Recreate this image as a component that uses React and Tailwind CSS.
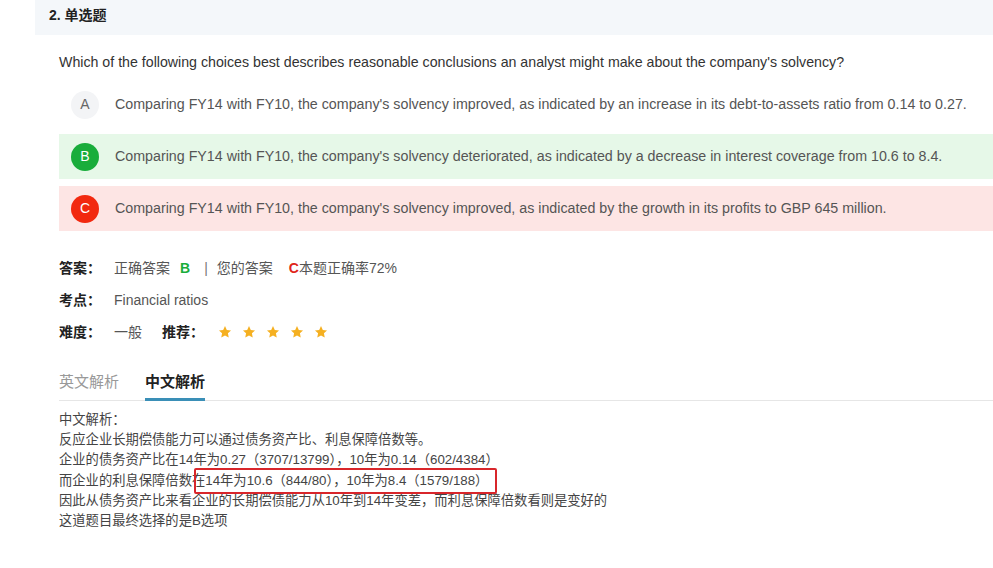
import React from 'react';

const options = [
  {
    key: 'A',
    text: "Comparing FY14 with FY10, the company's solvency improved, as indicated by an increase in its debt-to-assets ratio from 0.14 to 0.27.",
    row: 'bg-white',
    dot: 'bg-[#f3f4f6] text-[#666]',
  },
  {
    key: 'B',
    text: "Comparing FY14 with FY10, the company's solvency deteriorated, as indicated by a decrease in interest coverage from 10.6 to 8.4.",
    row: 'bg-[#e6f8e8]',
    dot: 'bg-[#19ad3b] text-white',
  },
  {
    key: 'C',
    text: "Comparing FY14 with FY10, the company's solvency improved, as indicated by the growth in its profits to GBP 645 million.",
    row: 'bg-[#fde5e4]',
    dot: 'bg-[#f2290f] text-white',
  },
];

function Star() {
  return (
    <svg width="14" height="14" viewBox="0 0 24 24" className="shrink-0">
      <path
        d="M12 1.8l3.1 6.6 7.2.9-5.3 5 1.4 7.1L12 17.9l-6.4 3.5 1.4-7.1-5.3-5 7.2-.9z"
        fill="#f5b021"
      />
    </svg>
  );
}

export default function App() {
  return (
    <div
      className="w-[993px] h-[568px] bg-white overflow-hidden text-[#333]"
      style={{ fontFamily: '"Liberation Sans", "Noto Sans CJK SC", sans-serif' }}
    >
      {/* header */}
      <div className="ml-[35px] h-[35px] bg-[#f4f7fa] pl-[14px] pb-[5px] flex items-center text-[14px] font-bold text-[#222]">
        2. 单选题
      </div>

      <div className="pl-[59px]">
        <p className="mt-[17px] text-[14.2px] leading-[20px] text-[#333] whitespace-nowrap">
          Which of the following choices best describes reasonable conclusions an analyst might make about the company's solvency?
        </p>

        {/* options */}
        <div className="mt-[10px] flex flex-col gap-[7px]">
          {options.map((o) => (
            <div key={o.key} className={`h-[45px] flex items-center pl-[12px] ${o.row}`}>
              <div className={`w-[28px] h-[28px] rounded-full flex items-center justify-center text-[14px] shrink-0 ${o.dot}`}>
                {o.key}
              </div>
              <span className="ml-[16px] text-[14.25px] text-[#555] whitespace-nowrap">{o.text}</span>
            </div>
          ))}
        </div>

        {/* answer info */}
        <div className="mt-[21px] text-[14px]">
          <div className="h-[32px] flex items-center">
            <span className="w-[55px] font-bold text-[#222]">答案：</span>
            <span className="text-[#555]">正确答案</span>
            <span className="ml-[10px] font-bold text-[#19ad3b]">B</span>
            <span className="ml-[14px] text-[#777]">|</span>
            <span className="ml-[9px] text-[#555]">您的答案</span>
            <span className="ml-[16px] font-bold text-[#e0261a]">C</span>
            <span className="text-[#555]">本题正确率72%</span>
          </div>
          <div className="h-[32px] flex items-center">
            <span className="w-[55px] font-bold text-[#222]">考点：</span>
            <span className="text-[#555]">Financial ratios</span>
          </div>
          <div className="h-[32px] flex items-center">
            <span className="w-[55px] font-bold text-[#222]">难度：</span>
            <span className="text-[#555]">一般</span>
            <span className="ml-[20px] font-bold text-[#222]">推荐：</span>
            <div className="ml-[14px] flex items-center gap-[10px]">
              <Star />
              <Star />
              <Star />
              <Star />
              <Star />
            </div>
          </div>
        </div>

        {/* tabs */}
        <div className="mt-[22px] flex gap-[26px] border-b border-[#e6e6e6] text-[15px]">
          <div className="h-[31px] -mb-px border-b-[3px] border-transparent leading-[24px] text-[#999]">英文解析</div>
          <div className="h-[31px] -mb-px border-b-[3px] border-[#3a8fb7] leading-[24px] font-bold text-[#222]">中文解析</div>
        </div>

        {/* analysis */}
        <div className="mt-[9px] text-[13.3px] leading-[20.2px] text-[#444]">
          <p>中文解析：</p>
          <p>反应企业长期偿债能力可以通过债务资产比、利息保障倍数等。</p>
          <p>企业的债务资产比在14年为0.27（3707/13799），10年为0.14（602/4384）</p>
          <p className="relative">
            而企业的利息保障倍数在14年为10.6（844/80），10年为8.4（1579/188）
            <span className="absolute left-[135px] top-[-3px] w-[303px] h-[26px] border-2 border-[#d8262b] rounded-[2px]" />
          </p>
          <p>因此从债务资产比来看企业的长期偿债能力从10年到14年变差，而利息保障倍数看则是变好的</p>
          <p>这道题目最终选择的是B选项</p>
        </div>
      </div>
    </div>
  );
}
